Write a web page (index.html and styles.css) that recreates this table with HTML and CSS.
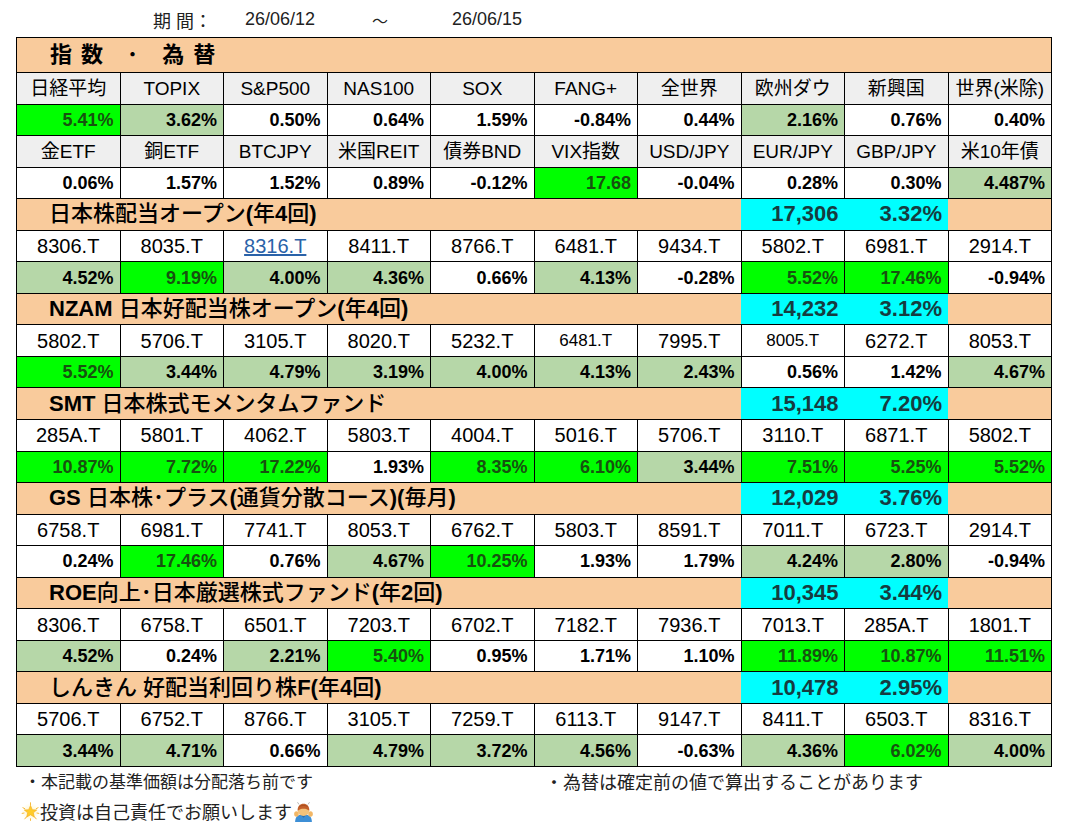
FILE: index.html
```html
<!DOCTYPE html>
<html lang="ja">
<head>
<meta charset="utf-8">
<title>週間騰落率</title>
<link rel="stylesheet" href="styles.css">
</head>
<body>
<div class="page">
  <div class="period">
    <span class="p-label">期 間：</span>
    <span class="p-from">26/06/12</span>
    <span class="p-tilde">～</span>
    <span class="p-to">26/06/15</span>
  </div>

  <table class="grid">
    <colgroup>
      <col><col><col><col><col><col><col><col><col><col>
    </colgroup>
    <tbody>
      <tr class="sec"><td colspan="10"><span class="sec-title">指数 ･ 為替</span></td></tr>
      <tr class="hdr">
        <td>日経平均</td><td>TOPIX</td><td>S&amp;P500</td><td>NAS100</td><td>SOX</td>
        <td>FANG+</td><td>全世界</td><td>欧州ダウ</td><td>新興国</td><td>世界(米除)</td>
      </tr>
      <tr class="val">
        <td class="hi">5.41%</td><td class="up">3.62%</td><td>0.50%</td><td>0.64%</td><td>1.59%</td>
        <td>-0.84%</td><td>0.44%</td><td class="up">2.16%</td><td>0.76%</td><td>0.40%</td>
      </tr>
      <tr class="hdr">
        <td>金ETF</td><td>銅ETF</td><td>BTCJPY</td><td>米国REIT</td><td>債券BND</td>
        <td>VIX指数</td><td>USD/JPY</td><td>EUR/JPY</td><td>GBP/JPY</td><td>米10年債</td>
      </tr>
      <tr class="val">
        <td>0.06%</td><td>1.57%</td><td>1.52%</td><td>0.89%</td><td>-0.12%</td>
        <td class="hi">17.68</td><td>-0.04%</td><td>0.28%</td><td>0.30%</td><td class="up">4.487%</td>
      </tr>

      <tr class="fund">
        <td colspan="7" class="fname">日本株配当オープン<b>(</b>年<b>4</b>回<b>)</b></td>
        <td class="nav">17,306</td><td class="nav">3.32%</td><td></td>
      </tr>
      <tr class="tick">
        <td>8306.T</td><td>8035.T</td><td><a class="link" href="#">8316.T</a></td><td>8411.T</td><td>8766.T</td>
        <td>6481.T</td><td>9434.T</td><td>5802.T</td><td>6981.T</td><td>2914.T</td>
      </tr>
      <tr class="val">
        <td class="up">4.52%</td><td class="hi">9.19%</td><td class="up">4.00%</td><td class="up">4.36%</td><td>0.66%</td>
        <td class="up">4.13%</td><td>-0.28%</td><td class="hi">5.52%</td><td class="hi">17.46%</td><td>-0.94%</td>
      </tr>

      <tr class="fund">
        <td colspan="7" class="fname"><b>NZAM</b> 日本好配当株オープン<b>(</b>年<b>4</b>回<b>)</b></td>
        <td class="nav">14,232</td><td class="nav">3.12%</td><td></td>
      </tr>
      <tr class="tick">
        <td>5802.T</td><td>5706.T</td><td>3105.T</td><td>8020.T</td><td>5232.T</td>
        <td class="small">6481.T</td><td>7995.T</td><td class="small">8005.T</td><td>6272.T</td><td>8053.T</td>
      </tr>
      <tr class="val">
        <td class="hi">5.52%</td><td class="up">3.44%</td><td class="up">4.79%</td><td class="up">3.19%</td><td class="up">4.00%</td>
        <td class="up">4.13%</td><td class="up">2.43%</td><td>0.56%</td><td>1.42%</td><td class="up">4.67%</td>
      </tr>

      <tr class="fund">
        <td colspan="7" class="fname"><b>SMT</b> 日本株式モメンタムファンド</td>
        <td class="nav">15,148</td><td class="nav">7.20%</td><td></td>
      </tr>
      <tr class="tick">
        <td>285A.T</td><td>5801.T</td><td>4062.T</td><td>5803.T</td><td>4004.T</td>
        <td>5016.T</td><td>5706.T</td><td>3110.T</td><td>6871.T</td><td>5802.T</td>
      </tr>
      <tr class="val">
        <td class="hi">10.87%</td><td class="hi">7.72%</td><td class="hi">17.22%</td><td>1.93%</td><td class="hi">8.35%</td>
        <td class="hi">6.10%</td><td class="up">3.44%</td><td class="hi">7.51%</td><td class="hi">5.25%</td><td class="hi">5.52%</td>
      </tr>

      <tr class="fund">
        <td colspan="7" class="fname"><b>GS</b> 日本株･プラス<b>(</b>通貨分散コース<b>)(</b>毎月<b>)</b></td>
        <td class="nav">12,029</td><td class="nav">3.76%</td><td></td>
      </tr>
      <tr class="tick">
        <td>6758.T</td><td>6981.T</td><td>7741.T</td><td>8053.T</td><td>6762.T</td>
        <td>5803.T</td><td>8591.T</td><td>7011.T</td><td>6723.T</td><td>2914.T</td>
      </tr>
      <tr class="val">
        <td>0.24%</td><td class="hi">17.46%</td><td>0.76%</td><td class="up">4.67%</td><td class="hi">10.25%</td>
        <td>1.93%</td><td>1.79%</td><td class="up">4.24%</td><td class="up">2.80%</td><td>-0.94%</td>
      </tr>

      <tr class="fund">
        <td colspan="7" class="fname"><b>ROE</b>向上･日本厳選株式ファンド<b>(</b>年<b>2</b>回<b>)</b></td>
        <td class="nav">10,345</td><td class="nav">3.44%</td><td></td>
      </tr>
      <tr class="tick">
        <td>8306.T</td><td>6758.T</td><td>6501.T</td><td>7203.T</td><td>6702.T</td>
        <td>7182.T</td><td>7936.T</td><td>7013.T</td><td>285A.T</td><td>1801.T</td>
      </tr>
      <tr class="val">
        <td class="up">4.52%</td><td>0.24%</td><td class="up">2.21%</td><td class="hi">5.40%</td><td>0.95%</td>
        <td>1.71%</td><td>1.10%</td><td class="hi">11.89%</td><td class="hi">10.87%</td><td class="hi">11.51%</td>
      </tr>

      <tr class="fund">
        <td colspan="7" class="fname">しんきん 好配当利回り株<b>F(</b>年<b>4</b>回<b>)</b></td>
        <td class="nav">10,478</td><td class="nav">2.95%</td><td></td>
      </tr>
      <tr class="tick">
        <td>5706.T</td><td>6752.T</td><td>8766.T</td><td>3105.T</td><td>7259.T</td>
        <td>6113.T</td><td>9147.T</td><td>8411.T</td><td>6503.T</td><td>8316.T</td>
      </tr>
      <tr class="val">
        <td class="up">3.44%</td><td class="up">4.71%</td><td>0.66%</td><td class="up">4.79%</td><td class="up">3.72%</td>
        <td class="up">4.56%</td><td>-0.63%</td><td class="up">4.36%</td><td class="hi">6.02%</td><td class="up">4.00%</td>
      </tr>
    </tbody>
  </table>

  <div class="notes">
    <div class="note-row note-first">
      <span class="note note-left">・本記載の基準価額は分配落ち前です</span>
      <span class="note note-right">・為替は確定前の値で算出することがあります</span>
    </div>
    <div class="note-row note-last">
      <svg class="emoji" viewBox="0 0 20 20" aria-hidden="true">
        <defs>
          <radialGradient id="glow" cx="50%" cy="50%" r="50%">
            <stop offset="0" stop-color="#fff6c2"/>
            <stop offset="1" stop-color="#fff6c2" stop-opacity="0"/>
          </radialGradient>
        </defs>
        <circle cx="10" cy="10.5" r="9.5" fill="url(#glow)"/>
        <g stroke="#f7b733" stroke-width="1" stroke-linecap="round">
          <line x1="10" y1="0.8" x2="10" y2="3.2"/>
          <line x1="2" y1="6" x2="4" y2="7"/>
          <line x1="18" y1="6" x2="16" y2="7"/>
          <line x1="4" y1="17.8" x2="5.6" y2="15.8"/>
          <line x1="16" y1="17.8" x2="14.4" y2="15.8"/>
          <line x1="1.2" y1="12" x2="3.2" y2="11.6"/>
          <line x1="18.8" y1="12" x2="16.8" y2="11.6"/>
          <line x1="10" y1="19.4" x2="10" y2="17.6"/>
        </g>
        <polygon points="10,3.6 11.9,8.1 16.6,8.4 13,11.4 14.1,16 10,13.5 5.9,16 7,11.4 3.4,8.4 8.1,8.1" fill="#ffcc29" stroke="#f2a71b" stroke-width="0.6" stroke-linejoin="round"/>
      </svg>
      <span class="note note-big">投資は自己責任でお願いします</span>
      <svg class="emoji emoji-bow" viewBox="0 0 20 20" aria-hidden="true">
        <path d="M2 20 C2 14.5 5 12.5 10 12.5 C15 12.5 18 14.5 18 20 Z" fill="#3d8fd6"/>
        <path d="M7 12.8 L10 16 L13 12.8 Z" fill="#2c6fb0"/>
        <ellipse cx="10" cy="9.6" rx="5.4" ry="4.6" fill="#f4c27a"/>
        <path d="M4.4 9.4 C4.2 4.6 6.8 2.6 10 2.6 C13.2 2.6 15.8 4.6 15.6 9.4 C14 8 12.2 7.4 10 7.4 C7.8 7.4 6 8 4.4 9.4 Z" fill="#c4602a"/>
        <path d="M6 5.2 C7.5 4 12.5 4 14 5.2" stroke="#9a4318" stroke-width="0.6" fill="none"/>
        <ellipse cx="3.3" cy="12.4" rx="2.2" ry="2.6" fill="#f2b766"/>
        <ellipse cx="16.7" cy="12.4" rx="2.2" ry="2.6" fill="#f2b766"/>
        <g stroke="#8a8a8a" stroke-width="0.6" stroke-linecap="round">
          <line x1="4.5" y1="1.5" x2="5.5" y2="3"/>
          <line x1="15.5" y1="1.5" x2="14.5" y2="3"/>
        </g>
      </svg>
    </div>
  </div>
</div>
</body>
</html>
```

FILE: styles.css
```css
html, body {
  margin: 0;
  padding: 0;
  background: #ffffff;
}

body {
  font-family: "Liberation Sans", "Noto Sans CJK JP", sans-serif;
  color: #000;
}

.page {
  width: 1035px;
  padding: 0 16px;
}

/* period line */
.period {
  height: 37px;
  display: flex;
  align-items: center;
  font-size: 18px;
  color: #222;
  padding-top: 2px;
  box-sizing: border-box;
}

.p-label {
  margin-left: 137px;
  width: 92px;
}

.p-from {
  width: 127px;
}

.p-tilde {
  width: 80px;
  font-size: 16px;
}

/* grid table */
.grid {
  width: 1035px;
  table-layout: fixed;
  border-collapse: collapse;
  border: 1px solid #000;
}

.grid col {
  width: 103.5px;
}

.grid td {
  border: 1px solid #000;
  padding: 0 6px;
  height: 30.55px;
  white-space: nowrap;
  overflow: hidden;
  line-height: 1;
  vertical-align: middle;
}

/* section header */
.sec td {
  background: #f9cb9c;
  height: 34px;
  padding-left: 33px;
  border-left: none;
  border-right: none;
}

.sec-title {
  font-size: 22px;
  font-weight: 700;
  letter-spacing: 9px;
}

/* label rows */
.hdr td {
  background: #efefef;
  text-align: center;
  font-size: 19px;
}

/* ticker rows */
.tick td {
  background: #fff;
  text-align: center;
  font-size: 20px;
}

.tick td.small {
  font-size: 17px;
}

.link {
  color: #2a62a8;
  text-decoration: underline;
}

/* value rows */
.val td {
  background: #fff;
  text-align: right;
  font-size: 18px;
  font-weight: 700;
  padding-right: 6px;
}

.val td.up {
  background: #b6d7a8;
}

.val td.hi {
  background: #00ff00;
  color: #17520f;
}

/* fund header rows */
.fund td {
  background: #f9cb9c;
  border-left: none;
  border-right: none;
}

.fund td.fname {
  font-size: 22px;
  padding-left: 32px;
  font-weight: 500;
}

.fname b {
  font-weight: 700;
}

.fund td.nav {
  background: #00ffff;
  color: #163c40;
  font-size: 22px;
  font-weight: 700;
  text-align: right;
  padding-right: 6px;
}

/* notes */
.notes {
  font-size: 17px;
  color: #222;
}

.note-row {
  display: flex;
  align-items: center;
  padding-left: 8px;
}

.note-first {
  height: 27px;
}

.note-left {
  width: 521px;
  flex: none;
}

.note-right {
  font-size: 18px;
}

.note-big {
  font-size: 18px;
}

.note-last {
  height: 34px;
  padding-left: 5px;
}

.emoji {
  width: 19px;
  height: 19px;
  flex: none;
}

.emoji-bow {
  width: 21px;
  height: 21px;
  margin-left: 1px;
}
```
